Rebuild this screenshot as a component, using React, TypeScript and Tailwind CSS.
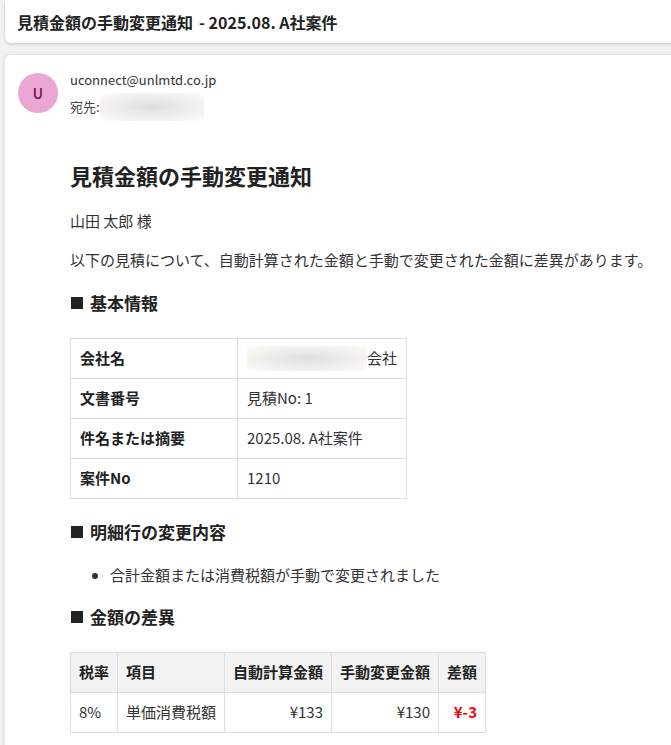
import React from 'react'

const font = { fontFamily: '"Noto Sans CJK JP", "Noto Sans", sans-serif' }

// ぼかしで隠された部分
function Blur({ w, h }: { w: string; h: string }): JSX.Element {
  return (
    <span
      className={`inline-block ${w} ${h} bg-[radial-gradient(ellipse_at_center,#dedede_0%,#ececec_45%,#f8f6f1_80%,#ffffff_100%)]`}
    />
  )
}

function Heading({ children, className = '' }: { children: React.ReactNode; className?: string }) {
  return (
    <h2 className={`text-[17px] leading-[26px] font-bold text-[#222] flex items-center ${className}`}>
      <span className="inline-block w-[12px] h-[12px] bg-[#222] mr-[7px] ml-[1px]" />
      {children}
    </h2>
  )
}

const infoRows = [
  { label: '会社名', value: null },
  { label: '文書番号', value: '見積No: 1' },
  { label: '件名または摘要', value: '2025.08. A社案件' },
  { label: '案件No', value: '1210' }
]

function App(): JSX.Element {
  return (
    <div className="min-h-screen bg-[#f1f1f1] overflow-hidden text-[#333]" style={font}>
      {/* 件名バー */}
      <div className="ml-[5px] mr-[-10px] h-[43px] bg-white rounded-b-md shadow-[0_1px_3px_rgba(0,0,0,0.18)] flex items-center pl-[12px]">
        <span className="text-[16px] font-bold text-[#222]">見積金額の手動変更通知</span>
        <span className="text-[16px] font-semibold text-[#222] ml-[6px]">- 2025.08. A社案件</span>
      </div>

      {/* メール本文 */}
      <div className="mt-[11px] ml-[4px] mr-[-10px] bg-white rounded-tl-md border-l border-t border-[#e6e6e6] shadow-[0_1px_3px_rgba(0,0,0,0.12)] min-h-[720px]">
        <div className="flex pt-[15px] pl-[13px]">
          <div className="mt-[3px] w-[40px] h-[40px] rounded-full bg-[#eba7d4] flex items-center justify-center text-[14px] font-medium text-[#6b0f45]">
            U
          </div>
          <div className="ml-[12px]">
            <div className="text-[13px] leading-[20px] text-[#333]">uconnect@unlmtd.co.jp</div>
            <div className="mt-[3px] h-[28px] flex items-center text-[13px] text-[#444]">
              <span>宛先:</span>
              <Blur w="w-[104px]" h="h-[28px]" />
            </div>
          </div>
        </div>

        <div className="pl-[65px] pt-[39px] pb-[20px]">
          <h1 className="text-[22px] leading-[30px] font-bold text-[#222]">見積金額の手動変更通知</h1>
          <p className="mt-[19px] text-[15px] leading-[24px]">山田 太郎 様</p>
          <p className="mt-[15px] text-[15px] leading-[24px] whitespace-nowrap">
            以下の見積について、自動計算された金額と手動で変更された金額に差異があります。
          </p>

          <Heading className="mt-[18px]">基本情報</Heading>
          <table className="mt-[22px] border-collapse text-[15px]">
            <tbody>
              {infoRows.map((r) => (
                <tr key={r.label} className="h-[40px]">
                  <td className="w-[167px] border border-[#dddddd] px-[9px] font-bold text-[#222]">{r.label}</td>
                  <td className="w-[168px] border border-[#dddddd] px-[9px] whitespace-nowrap">
                    {r.value ?? (
                      <span className="flex items-center">
                        <Blur w="w-[120px]" h="h-[25px]" />
                        <span>会社</span>
                      </span>
                    )}
                  </td>
                </tr>
              ))}
            </tbody>
          </table>

          <Heading className="mt-[20px]">明細行の変更内容</Heading>
          <ul className="mt-[18px] text-[15px] leading-[24px] list-disc pl-[40px]">
            <li>合計金額または消費税額が手動で変更されました</li>
          </ul>

          <Heading className="mt-[17px]">金額の差異</Heading>
          <table className="mt-[22px] border-collapse text-[15px]">
            <thead>
              <tr className="h-[40px] bg-[#f2f2f2] text-[#222]">
                <th className="w-[47px] border border-[#dddddd] px-[8px] text-left font-bold">税率</th>
                <th className="w-[107px] border border-[#dddddd] px-[8px] text-left font-bold">項目</th>
                <th className="w-[107px] border border-[#dddddd] px-[8px] text-right font-bold">自動計算金額</th>
                <th className="w-[107px] border border-[#dddddd] px-[8px] text-right font-bold">手動変更金額</th>
                <th className="w-[47px] border border-[#dddddd] px-[8px] text-right font-bold">差額</th>
              </tr>
            </thead>
            <tbody>
              <tr className="h-[40px]">
                <td className="border border-[#dddddd] px-[8px]">8%</td>
                <td className="border border-[#dddddd] px-[8px] whitespace-nowrap">単価消費税額</td>
                <td className="border border-[#dddddd] px-[8px] text-right">¥133</td>
                <td className="border border-[#dddddd] px-[8px] text-right">¥130</td>
                <td className="border border-[#dddddd] px-[8px] text-right font-bold text-[#ff0000]">¥-3</td>
              </tr>
            </tbody>
          </table>
        </div>
      </div>
    </div>
  )
}

export default App
